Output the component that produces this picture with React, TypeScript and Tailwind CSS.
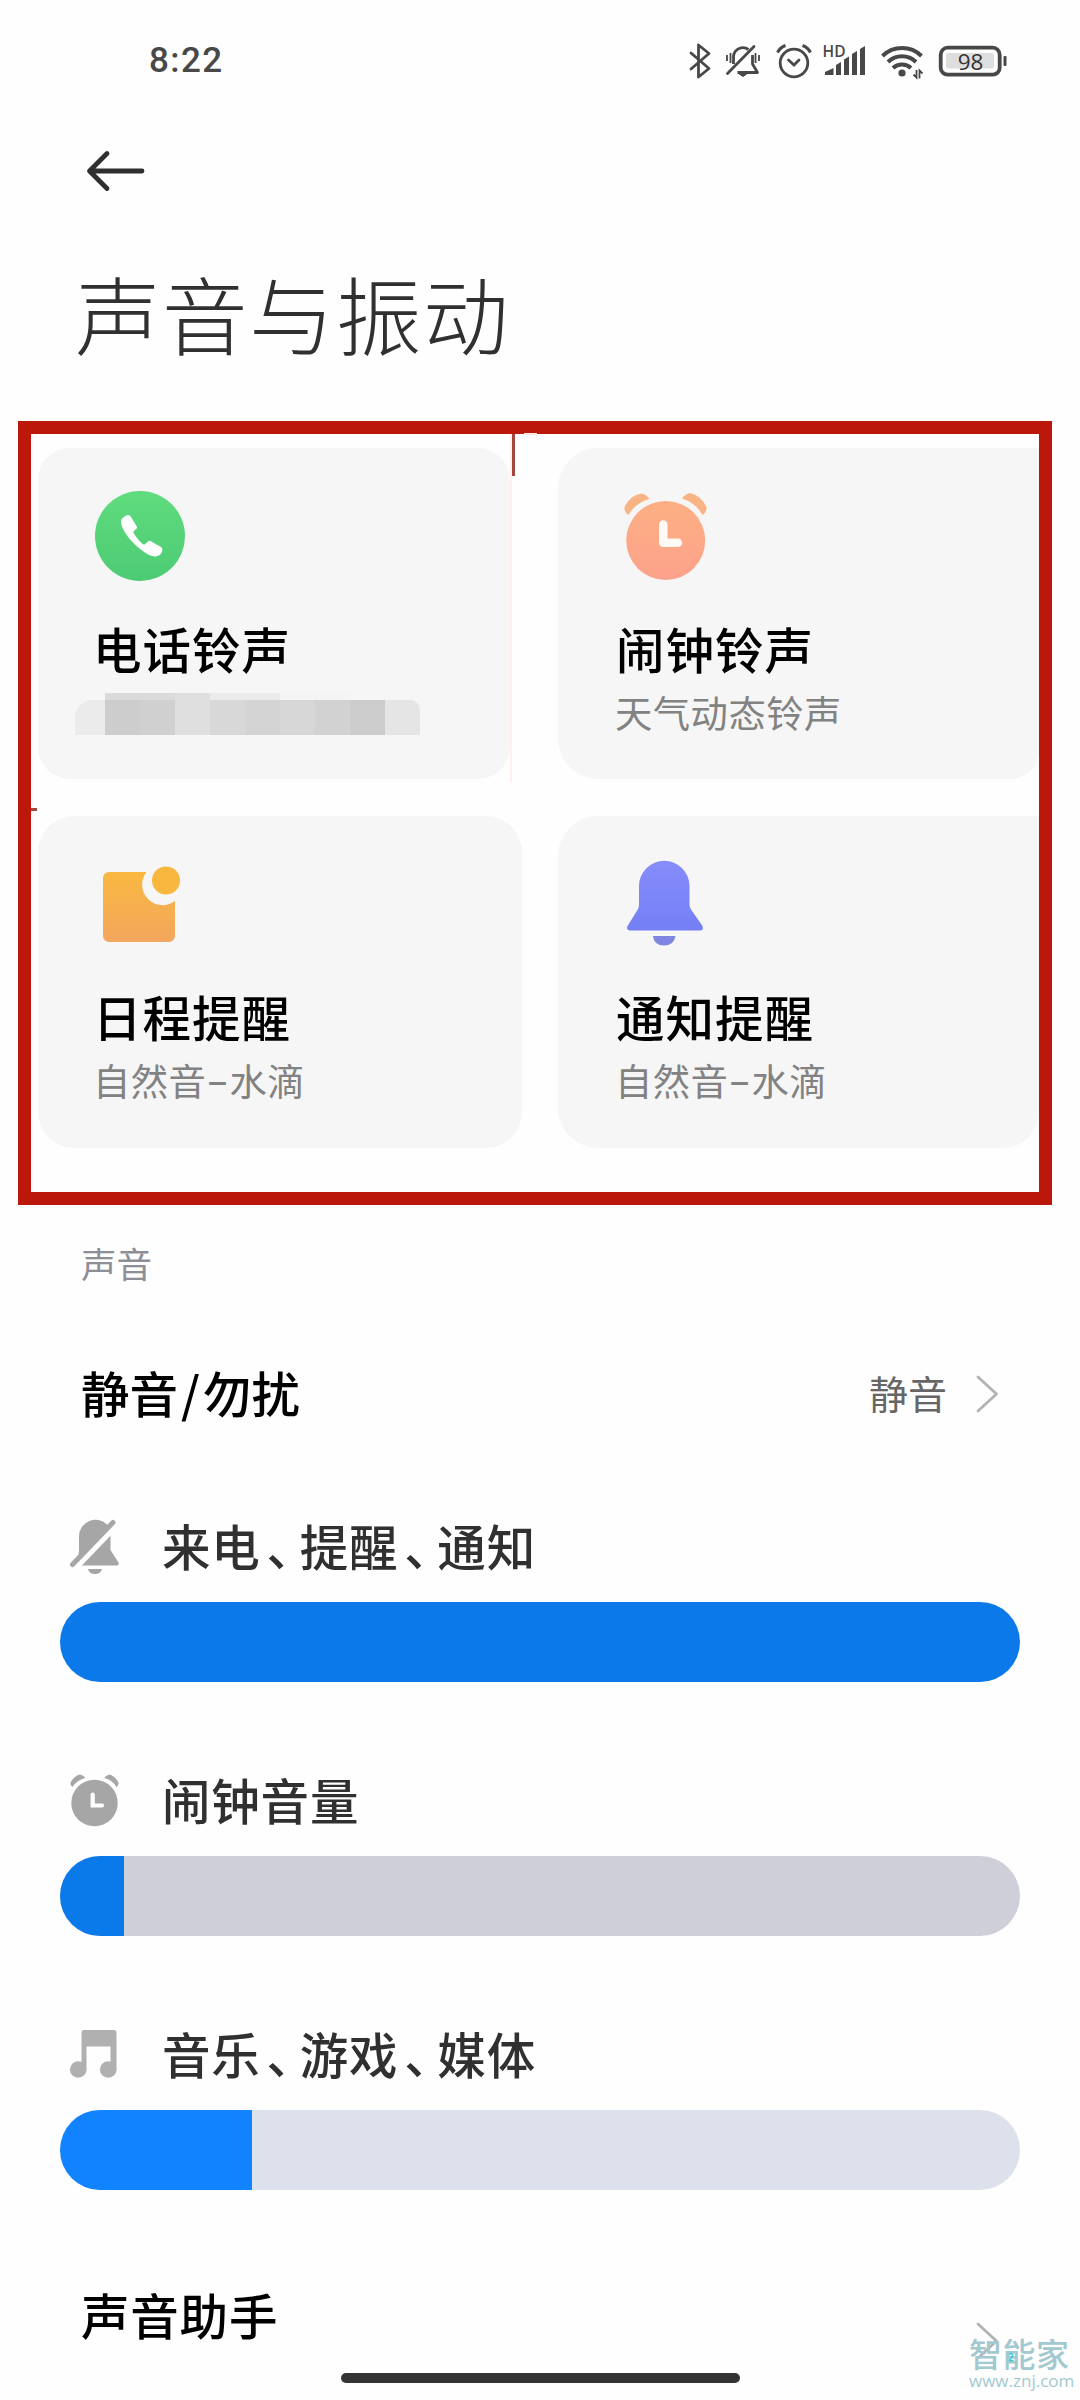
import type { ReactNode } from "react";
import clsx from "clsx";

function StatusBar() {
  return (
    <header className="flex h-[121px] items-center justify-between pr-[71px] pl-[149px] text-[#484848]">
      <span className="font-['Roboto',sans-serif] text-[35px] leading-none font-medium tracking-[1.4px]">8:22</span>
      <svg width="320" height="40" viewBox="688 40 320 40" fill="none" stroke="currentColor">
        {/* bluetooth */}
        <path d="M690 52l18 15.500L697.500 76V44L708 52.500 690 68" strokeWidth="2.800" strokeLinejoin="round" strokeLinecap="round" />
        {/* muted bell */}
        <path d="M732.500 63V55a9.500 9.500 0 0 1 15-6.500M751.500 54v9l5 8.500h-20" strokeWidth="2.800" strokeLinejoin="round" />
        <path d="M726.500 72.500L753 45.500" strokeWidth="2.800" strokeLinecap="round" />
        <path d="M737.500 72.500h9l-4.500 3z" fill="currentColor" strokeWidth="1" />
        <path d="M726 54v6M729.500 52v10M754.500 52v10M758 54v6" strokeWidth="1.800" />
        {/* alarm */}
        <circle cx="793" cy="62" r="13.800" strokeWidth="2.800" />
        <path d="M787.500 59l5.500 5 5-5" strokeWidth="2.800" strokeLinecap="round" />
        <path d="M776.500 51.500q2.500-5 8-7M801.500 44.500q5.500 2 8 7" strokeWidth="3" />
        {/* signal */}
        <path d="M824 74v-3l8.500-4v7zM835 64l5-3v13h-5zM843 58.500l5-3V74h-5zM851 53l5-3v24h-5zM859 48l5-3v29h-5z" fill="currentColor" stroke="none" />
        <text x="821.500" y="55.500" fill="currentColor" stroke="none" className="font-['Open_Sans',sans-serif] text-[15.500px] font-semibold">HD</text>
        {/* wifi */}
        <path d="M881.500 55a28 28 0 0 1 39 0M887 61a20 20 0 0 1 28 0M892 67a13 13 0 0 1 18 0" strokeWidth="4" />
        <circle cx="901" cy="72" r="3.600" fill="currentColor" stroke="none" />
        <path d="M912.500 73.500l3 3V69M918.500 77.500V69.500l3 3" strokeWidth="1.800" />
        {/* battery */}
        <rect x="939.700" y="46.700" width="59" height="27" rx="7" strokeWidth="3.800" />
        <rect x="945" y="52" width="48" height="15.500" rx="2" fill="#dedede" stroke="none" />
        <rect x="1002.500" y="55" width="3" height="10" rx="1" fill="currentColor" stroke="none" />
        <text x="969.500" y="68.500" textAnchor="middle" fill="#333" stroke="none" className="font-['Open_Sans',sans-serif] text-[22.500px] font-medium">98</text>
      </svg>
    </header>
  );
}

function PhoneIcon() {
  return (
    <svg width="100" height="90" viewBox="0 0 100 90">
      <defs>
        <linearGradient id="phone" x1="0" y1="0" x2="0" y2="1">
          <stop offset="0" stopColor="#60dc7e" />
          <stop offset="1" stopColor="#4dcb74" />
        </linearGradient>
      </defs>
      <circle cx="45" cy="45" r="45" fill="url(#phone)" />
      <path
        d="M27 27.500q3.500-3.500 6.500-3.500 1.500 0 2.500 2l6 10q.5 1.200-.8 2l-2.400 2q-1 1 0 2.600 4 6.400 8.500 10.200 1.500 1 2.500.4l3.500-3q1-.8 2.200-.2l10.500 6q2 1.500 1.200 4-1.400 4.500-6.200 5.500-3 .5-8-2Q41 56 33.500 46.500 27.500 38.500 26.200 33q-.7-3.500.8-5.500z"
        fill="#fff"
      />
    </svg>
  );
}

function AlarmIcon() {
  return (
    <svg width="100" height="90" viewBox="0 0 100 90">
      <defs>
        <linearGradient id="alarm" x1="0" y1="0" x2="0" y2="1">
          <stop offset="0" stopColor="#fdb083" />
          <stop offset="1" stopColor="#fca18b" />
        </linearGradient>
      </defs>
      <path d="M13.500 24Q9 21 9.500 16 15 4.500 26.500 2.500q5 1 8 5.500Q20 12 13.500 24zM87.500 24q4.500-3 4-8Q86 4.500 75 2q-5 1-8 5.500Q81 12 87.500 24z" fill="#f9b486" />
      <circle cx="50.700" cy="49.500" r="39.500" fill="url(#alarm)" />
      <path d="M48.300 33.500v18.200H63" fill="none" stroke="#fffaf5" strokeWidth="8.500" strokeLinecap="round" strokeLinejoin="round" />
    </svg>
  );
}

function CalendarIcon() {
  return (
    <svg width="100" height="90" viewBox="0 0 100 90">
      <defs>
        <linearGradient id="calendar" x1="0" y1="0" x2="0" y2="1">
          <stop offset="0" stopColor="#f9b840" />
          <stop offset="1" stopColor="#f3a65e" />
        </linearGradient>
      </defs>
      <path d="M14 13h37.500a20.500 20.500 0 0 0 28.500 29v35a6 6 0 0 1-6 6H14a6 6 0 0 1-6-6V19a6 6 0 0 1 6-6z" fill="url(#calendar)" />
      <circle cx="71" cy="21.500" r="14" fill="#f8b73f" />
    </svg>
  );
}

function BellIcon() {
  return (
    <svg width="100" height="90" viewBox="0 0 100 90">
      <defs>
        <linearGradient id="bell" x1="0" y1="0" x2="0" y2="1">
          <stop offset="0" stopColor="#868dfb" />
          <stop offset="1" stopColor="#757ff6" />
        </linearGradient>
      </defs>
      <path d="M24 27a25.200 25.200 0 0 1 50.500 0v19q0 2.500 1.500 4.500l11.500 16.500q1.500 4.500-2.500 4.500H15q-4-.5-2.500-4.500l10-16q1.500-2.500 1.500-5z" fill="url(#bell)" />
      <path d="M38 77h22.500Q59 86.500 49 86.500T38 77z" fill="#7d86e0" />
    </svg>
  );
}

function BellOffIcon() {
  return (
    <svg width="52" height="56" viewBox="0 0 52 56" fill="#a6a6a6" className="translate-y-px">
      <path d="M9 42l1-10V18.500A16.500 16.500 0 0 1 38 6.500l2 2z" />
      <path d="M41.500 15v17l8 12.500q1 3-2 3H12z" />
      <path d="M7 49.900L47.400 7.900" stroke="#fefefe" strokeWidth="5" />
      <path d="M3.500 46.500L44 4.500" stroke="#a6a6a6" strokeWidth="5" strokeLinecap="round" />
      <path d="M19 51h14q-1 5-7 5t-7-5z" />
    </svg>
  );
}

function ClockIcon() {
  return (
    <svg width="52" height="56" viewBox="0 0 52 56" fill="#a6a6a6" className="translate-y-px">
      <path d="M3.500 15q-2.500-2-2-4.500Q5 4 11 2.500q3.500.5 5.500 3.500Q8 8 3.500 15zM47.500 15q2.500-2 2-4.500Q46 4 40.500 2.500 37 3 35 6q8.500 2 12.500 9z" />
      <circle cx="25.500" cy="31" r="23.200" />
      <path d="M23.700 22.500v11h9.300" fill="none" stroke="#fff" strokeWidth="4.200" strokeLinecap="round" />
    </svg>
  );
}

function MusicIcon() {
  return (
    <svg width="52" height="56" viewBox="0 0 52 56" fill="#b0b0b0" className="translate-y-px">
      <path d="M12.500 6.500q0-2.500 2.500-2.500h30q2.500 0 2.500 2.500V44h-6V20.500H17.500V44h-5z" />
      <circle cx="9.200" cy="43.500" r="8.300" />
      <circle cx="39.200" cy="43.500" r="8.300" />
    </svg>
  );
}

function Chevron({ className }: { className?: string }) {
  return (
    <svg width="24" height="38" viewBox="0 0 24 38" fill="none" stroke="#b3b3b3" strokeWidth="2.800" className={className}>
      <path d="M2 2l18.500 17L2 36" strokeLinecap="round" strokeLinejoin="round" />
    </svg>
  );
}

const tiles = [
  { top: "bg-transparent", main: "w-[30px] rounded-tl-[18px] bg-[#ebebeb]" },
  { top: "bg-[#dadada]", main: "w-[35px] bg-[#cdcdcd]" },
  { top: "bg-[#dadada]", main: "w-[35px] bg-[#d0d0d0]" },
  { top: "bg-[#dfdfdf]", main: "w-[35px] bg-[#dfdfdf]" },
  { top: "bg-[#ebebeb]", main: "w-[35px] bg-[#d8d8d8]" },
  { top: "bg-[#ebebeb]", main: "w-[35px] bg-[#d4d4d4]" },
  { top: "bg-[#f4f4f4]", main: "w-[35px] bg-[#d7d7d7]" },
  { top: "bg-[#f4f4f4]", main: "w-[35px] bg-[#d2d2d2]" },
  { top: "bg-transparent", main: "w-[35px] bg-[#cccccc]" },
  { top: "bg-transparent", main: "w-[35px] rounded-tr-[10px] bg-[#e5e5e5]" },
];

// Pixelated strip hiding the ringtone name
function Mosaic() {
  return (
    <div className="mt-[15px] -ml-5 flex">
      {tiles.map((tile, i) => (
        <div key={i}>
          <div className={clsx("h-[7px]", tile.top)} />
          <div className={clsx("h-[35px]", tile.main)} />
        </div>
      ))}
    </div>
  );
}

type CardProps = { icon: ReactNode; title: string; children: ReactNode; className?: string };

function Card({ icon, title, children, className }: CardProps) {
  return (
    <section className={clsx("bg-[#f6f6f6] pt-[43px] pl-[57px]", className)}>
      {icon}
      <h2 className="mt-[37px] text-[48.500px] leading-[60px] font-medium tracking-[1px] text-black">{title}</h2>
      {children}
    </section>
  );
}

function Subtitle({ children }: { children: ReactNode }) {
  return <p className="mt-3 text-[37.300px] leading-[44px] tracking-[0.5px] text-[#828282]">{children}</p>;
}

const waterDrop = (
  <>
    自然音<span className="inline-block w-[23px] -translate-y-0.5 text-center font-medium">–</span>水滴
  </>
);

type VolumeProps = { icon: ReactNode; labels: string[]; percent: number; track: string; fill: string };

function Volume({ icon, labels, percent, track, fill }: VolumeProps) {
  return (
    <div className="mb-[87px]">
      <div className="flex h-[60px] items-center pl-[9px]">
        {icon}
        <span className="ml-[41px] text-[48.500px] leading-[60px] font-medium tracking-[0.8px] text-[#303030]">
          {labels.map((label, i) => (
            <span key={label}>
              {label}
              {i < labels.length - 1 && <span className="mr-[8px] ml-[6px] [font-feature-settings:'halt']">、</span>}
            </span>
          ))}
        </span>
      </div>
      <div className={clsx("mt-[27px] h-20 overflow-hidden rounded-full", track)}>
        <div className={clsx("h-full", fill)} style={{ width: `${percent}%` }} />
      </div>
    </div>
  );
}

export default function App() {
  return (
    <main className="relative h-[2400px] w-[1080px] overflow-hidden bg-[#fefefe] font-['Noto_Sans_CJK_SC',sans-serif]">
      <StatusBar />
      <div className="flex h-[99px] items-center pl-[85px]">
        <svg width="62" height="42" viewBox="0 0 62 42" fill="none" stroke="#2f2f2f" strokeWidth="4.800" strokeLinecap="round" strokeLinejoin="round">
          <path d="M57 21H5M22 3.500L4.500 21 22 38.500" />
        </svg>
      </div>
      <h1 className="h-[185px] pl-[75px] text-[85.500px] leading-[185px] font-light tracking-[1.500px] text-[#303030]">声音与振动</h1>

      <div className="relative mt-4 ml-[18px] h-[784px] w-[1034px] border-[13px] border-[#bb180b] bg-[#fefefe]">
        <div className="grid grid-cols-[484px_481px] grid-rows-[331px_332px] gap-x-9 gap-y-[37px] pt-[14px] pl-[7px]">
          <Card icon={<PhoneIcon />} title="电话铃声" className="mr-3 rounded-[32px] [&>h2]:-ml-0.5">
            <Mosaic />
          </Card>
          <Card icon={<AlarmIcon />} title="闹钟铃声" className="rounded-l-[40px] rounded-br-[28px] [&>h2]:ml-px">
            <Subtitle>天气动态铃声</Subtitle>
          </Card>
          <Card icon={<CalendarIcon />} title="日程提醒" className="rounded-[36px] [&>h2]:-ml-0.5 [&>p]:-ml-0.5">
            <Subtitle>{waterDrop}</Subtitle>
          </Card>
          <Card icon={<BellIcon />} title="通知提醒" className="rounded-l-[40px] rounded-br-[36px] [&>h2]:ml-px">
            <Subtitle>{waterDrop}</Subtitle>
          </Card>
        </div>
        {/* stray marks of the frame */}
        <i className="absolute top-0 left-[479px] h-[348px] w-[2px] bg-[#fdf0ed]" />
        <i className="absolute top-0 left-[481px] h-[42px] w-[3px] bg-[#a3463d]" />
        <i className="absolute top-[374px] left-0 h-[3px] w-[6px] bg-[#a3463d]" />
        <i className="absolute -top-[1px] left-[493px] h-[2px] w-[13px] bg-[#fbe9e6]" />
      </div>

      <h3 className="mt-[38px] pl-[81px] text-[35.500px] leading-10 text-[#8e8e97]">声音</h3>
      <div className="mt-[49px] flex h-[120px] items-center pr-[80px] pl-[81px]">
        <span className="flex-1 text-[48.500px] font-medium text-black">
          静音<span className="mx-[3px]">/</span>勿扰
        </span>
        <span className="mr-[29px] text-[39px] text-[#666]">静音</span>
        <Chevron className="translate-y-0.5" />
      </div>

      <div className="mt-[63px] px-[60px]">
        <Volume icon={<BellOffIcon />} labels={["来电", "提醒", "通知"]} percent={100} track="bg-[#cfcfda]" fill="bg-[#0b79e9]" />
        <Volume icon={<ClockIcon />} labels={["闹钟音量"]} percent={6.7} track="bg-[#cfcfda]" fill="bg-[#0a7aeb]" />
        <Volume icon={<MusicIcon />} labels={["音乐", "游戏", "媒体"]} percent={20} track="bg-[#dde1eb]" fill="bg-[#1283ff]" />
      </div>

      <div className="-mt-[13px] flex h-[100px] items-center justify-between pr-[80px] pl-[81px]">
        <span className="text-[48.500px] font-medium tracking-[0.8px] text-black">声音助手</span>
        <Chevron className="mb-1 self-end" />
      </div>
      <div className="mx-auto mt-[9px] h-[10px] w-[399px] rounded-full bg-[#333]" />

      {/* site watermark */}
      <div className="absolute top-[2335px] right-[9px] w-[102px] text-[#a3c9d0]">
        <p className="text-[33px] leading-[36px] font-medium tracking-[0.5px]">智能家</p>
        <p className="font-['Open_Sans',sans-serif] text-[17px] leading-[20px] font-medium">www.znj.com</p>
        <span className="absolute top-[18px] left-[39px] font-['Roboto',sans-serif] text-[10px] leading-none font-bold text-[#35c9d2]">2</span>
      </div>
    </main>
  );
}
